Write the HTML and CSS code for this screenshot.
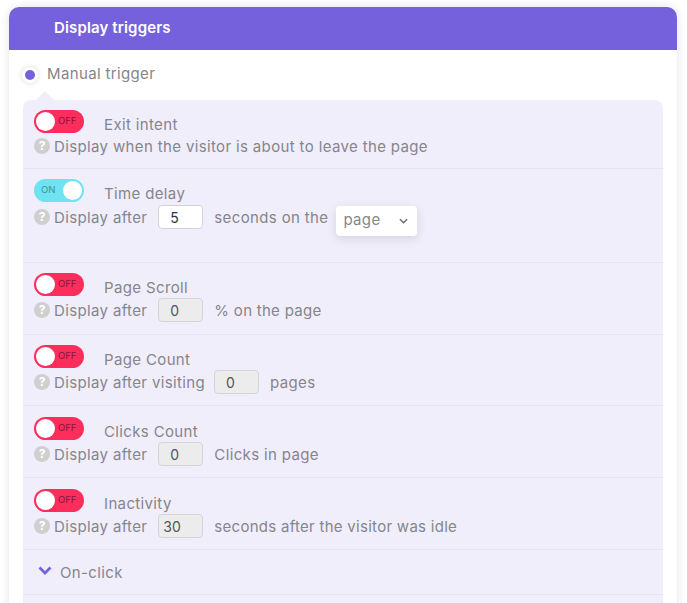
FILE: index.html
```html
<!DOCTYPE html>
<html lang="en">
<head>
<meta charset="utf-8">
<title>Display triggers</title>
<link rel="stylesheet" href="styles.css">
</head>
<body>
<section class="card">
  <header class="card-head">Display triggers</header>
  <div class="card-body">
    <label class="radio-row"><span class="radio"><span class="radio-dot"></span></span><span class="radio-label">Manual trigger</span></label>
    <div class="panel">
      <div class="row row-first">
        <div class="row-top"><span class="toggle off"><span class="knob"></span><span class="toggle-text">OFF</span></span><span class="row-title">Exit intent</span></div>
        <div class="row-line"><span class="help">?</span><span>Display when the visitor is about to leave the page</span></div>
      </div>
      <div class="row row-tall">
        <div class="row-top"><span class="toggle on"><span class="toggle-text">ON</span><span class="knob"></span></span><span class="row-title">Time delay</span></div>
        <div class="row-line"><span class="help">?</span><span>Display after</span><input class="num" value="5"><span>seconds on the</span>
          <span class="select"><span class="select-text">page</span><svg class="caret" viewBox="0 0 10 6" width="9" height="6"><path d="M1 1l4 4 4-4" fill="none" stroke="#6b6b76" stroke-width="1.6"/></svg></span></div>
      </div>
      <div class="row">
        <div class="row-top"><span class="toggle off"><span class="knob"></span><span class="toggle-text">OFF</span></span><span class="row-title">Page Scroll</span></div>
        <div class="row-line"><span class="help">?</span><span>Display after</span><input class="num" value="0" disabled><span class="tight">% on the page</span></div>
      </div>
      <div class="row row-short">
        <div class="row-top"><span class="toggle off"><span class="knob"></span><span class="toggle-text">OFF</span></span><span class="row-title">Page Count</span></div>
        <div class="row-line"><span class="help">?</span><span>Display after visiting</span><input class="num num-near" value="0" disabled><span>pages</span></div>
      </div>
      <div class="row row-pushed">
        <div class="row-top"><span class="toggle off"><span class="knob"></span><span class="toggle-text">OFF</span></span><span class="row-title">Clicks Count</span></div>
        <div class="row-line"><span class="help">?</span><span>Display after</span><input class="num" value="0" disabled><span>Clicks in page</span></div>
      </div>
      <div class="row row-pushed">
        <div class="row-top"><span class="toggle off"><span class="knob"></span><span class="toggle-text">OFF</span></span><span class="row-title">Inactivity</span></div>
        <div class="row-line"><span class="help">?</span><span>Display after</span><input class="num num-left" value="30" disabled><span class="tight">seconds after the visitor was idle</span></div>
      </div>
      <div class="row row-click"><svg class="chev" viewBox="0 0 14 9" width="14" height="9"><path d="M1.5 1.5L7 7l5.5-5.5" fill="none" stroke="#7661dd" stroke-width="2.8"/></svg><span>On-click</span></div>
      <div class="row row-end"></div>
    </div>
  </div>
</section>
</body>
</html>
```

FILE: styles.css
```css
html, body { margin: 0; height: 603px; overflow: hidden; background: #fff; }
body { padding: 7px 10px 0 9px; font-family: "Inter", "Open Sans", sans-serif; font-size: 15px; letter-spacing: .36px; color: #85858c; }
.card { border-radius: 12px 12px 0 0; background: #fff; box-shadow: 0 0 10px rgba(60, 60, 80, .14); height: 640px; }
.card-head { height: 43px; box-sizing: border-box; padding: 12px 0 0 45px; background: #7661dd; color: #fff; font-weight: 600; font-size: 15px; letter-spacing: .14px; line-height: 18px; border-radius: 10px 10px 0 0; }
.card-body { padding: 0 14px; }
.radio-row { display: flex; align-items: center; height: 50px; gap: 9px; margin-left: -1px; box-sizing: border-box; position: relative; }
.radio { width: 16px; height: 16px; border-radius: 50%; background: #fff; box-shadow: 0 0 5px rgba(60, 60, 80, .2); display: flex; align-items: center; justify-content: center; }
.radio-dot { width: 10px; height: 10px; border-radius: 50%; background: #7661dd; }
.radio-label { margin-top: -3px; }
.radio-row::after { content: ""; position: absolute; left: 14px; bottom: 0; border: 9px solid transparent; border-top: 0; border-bottom: 9px solid #f1eefb; }
.panel { background: #f1eefb; border-radius: 8px 8px 0 0; }
.row { border-bottom: 1px solid #e6e4ef; padding: 10px 11px 0; height: 72px; box-sizing: border-box; }
.row-first { height: 69px; }
.row-tall { height: 94px; }
.row-short { height: 71px; }
.row-pushed { padding-top: 11px; }
.row-top { display: flex; align-items: flex-start; height: 23px; }
.row-title { margin-left: 20px; padding-top: 5px; line-height: 20px; }
.toggle { width: 50px; height: 23px; border-radius: 12px; box-sizing: border-box; padding: 2px; display: flex; align-items: center; font-size: 9.5px; letter-spacing: 0; flex: none; }
.toggle.off { background: #ff2d5c; color: #8a1440; }
.toggle.on { background: #6fe3f0; color: #3f8ea0; justify-content: space-between; }
.toggle-text { line-height: 19px; margin: -2px 0 0 3px; }
.toggle.on .toggle-text { margin-left: 5px; }
.knob { width: 19px; height: 19px; border-radius: 50%; background: #fff; flex: none; }
.row-line { display: flex; align-items: center; margin-top: 2px; height: 24px; white-space: nowrap; }
.row-first .row-line { margin-top: 1px; }
.row-tall .row-line { margin-top: 3px; }
.tight { letter-spacing: .28px; }
.help { width: 16px; height: 16px; border-radius: 50%; background: #cfcfcf; color: #fff; font-size: 12px; letter-spacing: 0; font-weight: 700; text-align: center; line-height: 16px; margin-right: 4px; flex: none; }
.num { width: 45px; height: 24px; box-sizing: border-box; margin: 0 11px; padding: 0 0 0 11px; border: 1px solid #d3d3d8; border-radius: 4px; background: #fff; font: inherit; font-size: 14px; color: #333; }
.num:disabled { background: #ececec; color: #555; }
.num-left { padding-left: 4px; }
.num-near { margin-left: 9px; }
.select { display: inline-flex; align-items: center; justify-content: space-between; width: 81px; height: 30px; box-sizing: border-box; margin: 8px 0 0 8px; padding: 0 9px 0 7px; background: #fff; border-radius: 4px; box-shadow: 0 3px 10px rgba(60, 60, 100, .16); }
.select-text { margin-top: -3px; }
.row-click { height: 45px; padding: 0 15px 0; display: flex; align-items: center; gap: 8px; }
.chev { margin-top: -4px; }
.row-end { border: 0; height: 20px; }
```
